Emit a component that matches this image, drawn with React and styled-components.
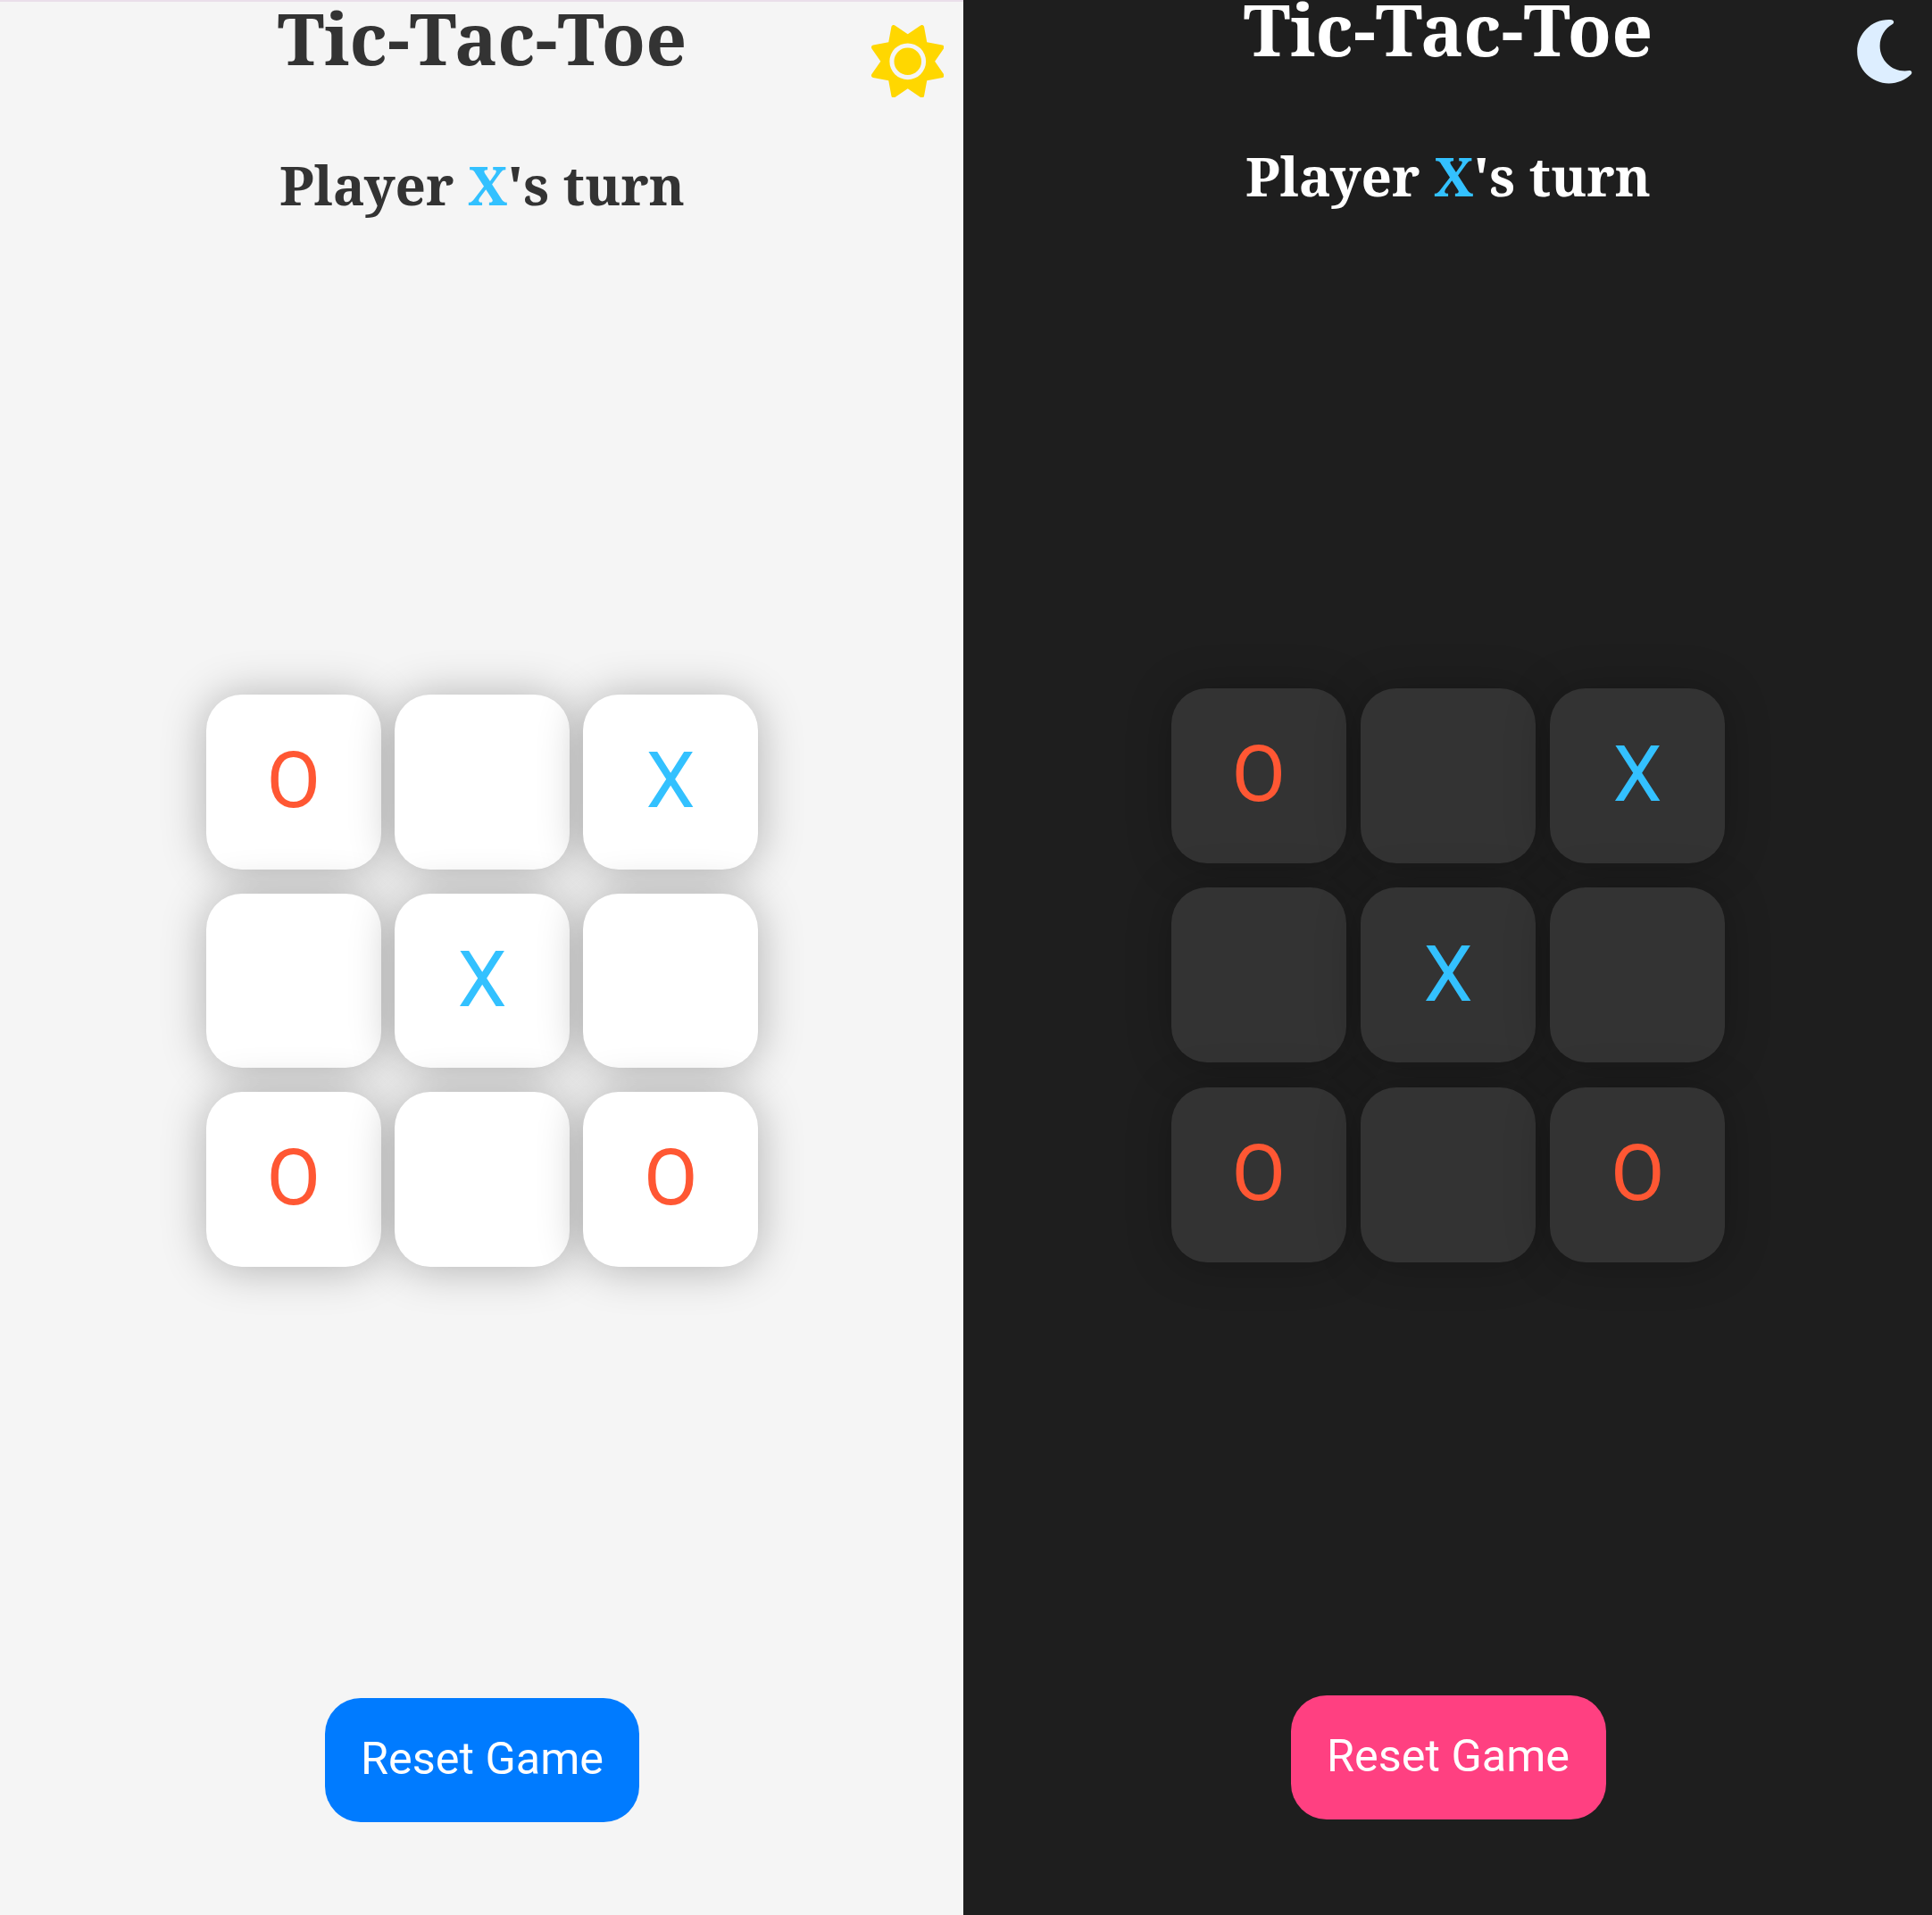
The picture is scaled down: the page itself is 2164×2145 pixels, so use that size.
import React from "react";
import styled, { createGlobalStyle, ThemeProvider } from "styled-components";
import { FaSun, FaMoon } from "react-icons/fa6";

const GlobalStyle = createGlobalStyle`
  * { box-sizing: border-box; }
  body { margin: 0; background: #1e1e1e; }
`;

const light = {
  width: "1079px",
  background: "#f5f5f5",
  bar: "2px solid #eadfea",
  text: "#333333",
  cell: "#ffffff",
  cellWidth: "195.5px",
  cellHeight: "195.5px",
  colGap: "15.7px",
  rowGap: "27px",
  boardShift: "1px",
  button: "#007bff",
  buttonWidth: "352px",
  icon: "#ffd700",
  titleTop: "-10px",
  statusGap: "75px",
  boardTop: "778px",
  buttonTop: "1901.5px",
  iconTop: "25.5px",
  iconRight: "22px",
  shadow: "0 2px 50px rgba(0, 0, 0, 0.29)",
};

const dark = {
  width: "1085px",
  background: "#1e1e1e",
  bar: "0 solid transparent",
  text: "#ffffff",
  cell: "#333333",
  cellWidth: "196.3px",
  cellHeight: "195.8px",
  colGap: "15.9px",
  rowGap: "27.6px",
  boardShift: "1px",
  button: "#ff4081",
  buttonWidth: "353px",
  icon: "#ddeeff",
  titleTop: "-18px",
  statusGap: "75px",
  boardTop: "771px",
  buttonTop: "1898.5px",
  iconTop: "17.2px",
  iconRight: "12.5px",
  shadow: "0 2px 50px rgba(0, 0, 0, 0.26)",
};

const Screens = styled.main`
  display: flex;
  width: 2164px;
  height: 2145px;
  overflow: hidden;
`;

const Panel = styled.section`
  display: grid;
  grid-template-rows:
    ${({ theme }) => theme.boardTop}
    calc(${({ theme }) => theme.buttonTop} - ${({ theme }) => theme.boardTop})
    1fr;
  justify-items: center;
  width: ${({ theme }) => theme.width};
  height: 2145px;
  background: ${({ theme }) => theme.background};
`;

const Header = styled.header`
  display: grid;
  grid-template-columns: 1fr 500px 1fr;
  align-items: start;
  width: 100%;
  border-top: ${({ theme }) => theme.bar};
`;

const Headings = styled.div`
  grid-column: 2;
  display: flex;
  flex-direction: column;
  align-items: center;
  gap: ${({ theme }) => theme.statusGap};
  margin-top: ${({ theme }) => theme.titleTop};
  padding-left: 1px;
  color: ${({ theme }) => theme.text};
  font-family: "Noto Serif", "DejaVu Serif Condensed", "DejaVu Serif", serif;
  white-space: nowrap;
`;

const Title = styled.h1`
  margin: 0;
  font-size: 80.4px;
  font-weight: 700;
  line-height: 100px;
`;

const Status = styled.h2`
  margin: 0;
  font-size: 60.3px;
  font-weight: 700;
  line-height: 80px;
`;

const MARK_COLORS = { X: "#33c1ff", O: "#ff5733" };

const Mark = styled.span`
  color: ${({ $mark }) => MARK_COLORS[$mark]};
`;

const ThemeToggle = styled.button`
  display: flex;
  justify-self: end;
  margin: ${({ theme }) => `${theme.iconTop} ${theme.iconRight} 0 0`};
  padding: 0;
  border: 0;
  background: none;
  color: ${({ theme }) => theme.icon};
  font-size: 81.5px;
`;

const Board = styled.div`
  display: grid;
  grid-template-columns: repeat(3, ${({ theme }) => theme.cellWidth});
  grid-auto-rows: ${({ theme }) => theme.cellHeight};
  gap: ${({ theme }) => `${theme.rowGap} ${theme.colGap}`};
  align-self: start;
  margin-left: ${({ theme }) => theme.boardShift};
`;

const Cell = styled.button`
  display: flex;
  align-items: center;
  justify-content: center;
  padding: 0 0 3px;
  border: 0;
  border-radius: 40px;
  background: ${({ theme }) => theme.cell};
  box-shadow: ${({ theme }) => theme.shadow};
  font-family: Roboto, sans-serif;
  font-size: 88px;
  line-height: 1;
`;

const ResetButton = styled.button`
  align-self: start;
  width: ${({ theme }) => theme.buttonWidth};
  height: 139px;
  margin-left: 1px;
  padding: 0 0 3px;
  border: 0;
  border-radius: 40px;
  background: ${({ theme }) => theme.button};
  color: #ffffff;
  font-family: Roboto, sans-serif;
  font-size: 50.4px;
  white-space: nowrap;
`;

const CELLS = ["O", "", "X", "", "X", "", "O", "", "O"];

function Game({ theme, Icon, toggleLabel }) {
  return (
    <ThemeProvider theme={theme}>
      <Panel>
        <Header>
          <Headings>
            <Title>Tic-Tac-Toe</Title>
            <Status>
              Player <Mark $mark="X">X</Mark>'s turn
            </Status>
          </Headings>
          <ThemeToggle aria-label={toggleLabel}>
            <Icon />
          </ThemeToggle>
        </Header>
        <Board>
          {CELLS.map((mark, index) => (
            <Cell key={index}>{mark && <Mark $mark={mark}>{mark}</Mark>}</Cell>
          ))}
        </Board>
        <ResetButton>Reset Game</ResetButton>
      </Panel>
    </ThemeProvider>
  );
}

export default function App() {
  return (
    <>
      <GlobalStyle />
      <Screens>
        <Game theme={light} Icon={FaSun} toggleLabel="Dark mode" />
        <Game theme={dark} Icon={FaMoon} toggleLabel="Light mode" />
      </Screens>
    </>
  );
}
